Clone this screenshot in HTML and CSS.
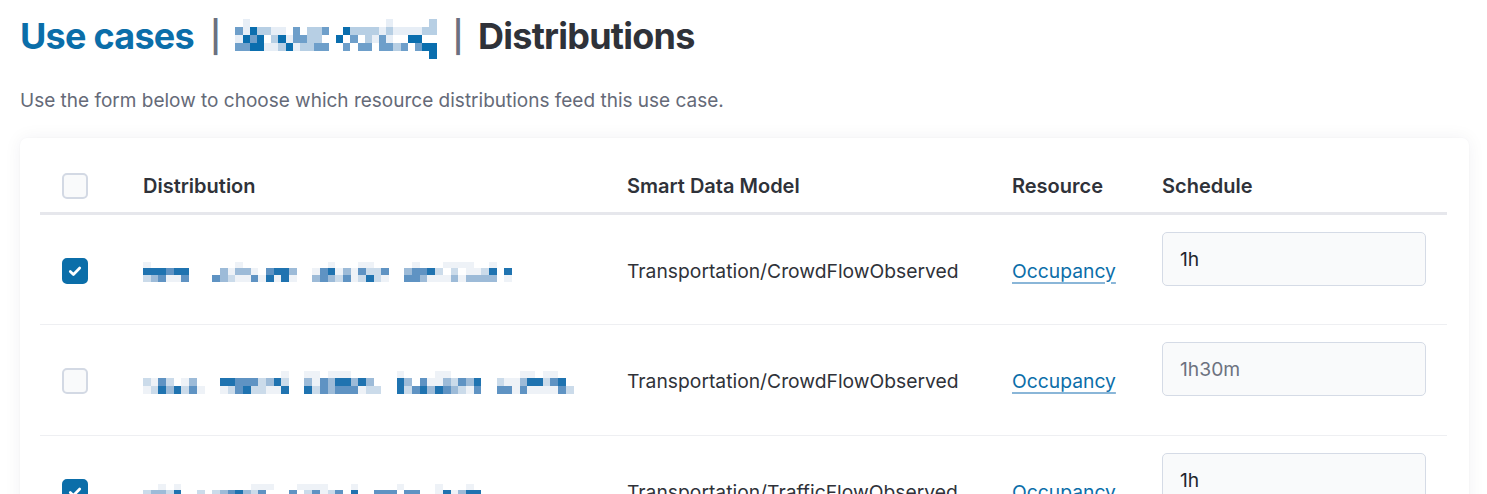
FILE: index.html
```html
<!DOCTYPE html>
<html lang="en">
<head>
<meta charset="utf-8">
<title>Distributions</title>
<link rel="stylesheet" href="styles.css">
</head>
<body>
<h1 class="title">
  <a class="crumb" href="#">Use cases</a>
  <span class="sep">|</span>
  <span class="mosaic mosaic-title" data-w="7.2" data-h="8" data-rows="0100000000000000000001000002|3142211030223004222212111122|1434024133220040302131004400|3344112412233003033033230344|0000000000000000000000000004"></span>
  <span class="sep">|</span>
  <span class="current">Distributions</span>
</h1>
<p class="lead">Use the form below to choose which resource distributions feed this use case.</p>

<div class="card">
  <table class="grid">
    <colgroup>
      <col class="c-check"><col class="c-dist"><col class="c-model"><col class="c-res"><col class="c-sched">
    </colgroup>
    <thead>
      <tr>
        <th><span class="box"></span></th>
        <th>Distribution</th>
        <th>Smart Data Model</th>
        <th>Resource</th>
        <th>Schedule</th>
      </tr>
    </thead>
    <tbody>
      <tr>
        <td><span class="box checked"><svg viewBox="0 0 16 16" width="18" height="18"><path d="M3.8 8.4l2.8 2.7L12.2 5.3" fill="none" stroke="#fff" stroke-width="2.4" stroke-linecap="round" stroke-linejoin="round"/></svg></span></td>
        <td><span class="mosaic mosaic-row" data-w="7.7" data-h="7" data-seed="3" data-cols="48" data-gaps="6,7,8,20,21,32,33,46"></span></td>
        <td>Transportation/CrowdFlowObserved</td>
        <td><a class="link" href="#">Occupancy</a></td>
        <td class="sched"><input class="field" type="text" value="1h"></td>
      </tr>
      <tr>
        <td><span class="box"></span></td>
        <td><span class="mosaic mosaic-row2" data-w="7.7" data-h="8" data-seed="11" data-cols="56" data-gaps="8,9,19,20,31,32,44,45"></span></td>
        <td>Transportation/CrowdFlowObserved</td>
        <td><a class="link" href="#">Occupancy</a></td>
        <td class="sched"><input class="field" type="text" placeholder="1h30m"></td>
      </tr>
      <tr>
        <td><span class="box checked"><svg viewBox="0 0 16 16" width="18" height="18"><path d="M3.8 8.4l2.8 2.7L12.2 5.3" fill="none" stroke="#fff" stroke-width="2.4" stroke-linecap="round" stroke-linejoin="round"/></svg></span></td>
        <td><span class="mosaic mosaic-row" data-w="7.7" data-h="7" data-seed="21" data-cols="44" data-gaps="5,6,17,18,28,29,36,37"></span></td>
        <td>Transportation/TrafficFlowObserved</td>
        <td><a class="link" href="#">Occupancy</a></td>
        <td class="sched"><input class="field" type="text" value="1h"></td>
      </tr>
    </tbody>
  </table>
</div>
<script src="mosaic.js"></script>
</body>
</html>
```

FILE: styles.css
```css
* { box-sizing: border-box; }
html, body { margin: 0; background: #ffffff; }
body {
  padding: 0 18px 0 20px;
  font-family: Inter, "Noto Sans", "Liberation Sans", sans-serif;
  color: #2f3239;
}
.title {
  margin: 13px 0 0;
  font-size: 36px;
  line-height: 43px;
  font-weight: 700;
  letter-spacing: -0.75px;
  display: flex;
  align-items: center;
}
.crumb { color: #0b6ea9; text-decoration: none; }
.sep {
  color: #6b7080;
  font-weight: 600;
  font-size: 31px;
  margin: 0 15px 0 16px;
}
.current { color: #2f3239; }
.lead {
  margin: 28px 0 0;
  font-size: 19px;
  line-height: 28px;
  color: #656a78;
}
.card {
  margin-top: 23px;
  background: #fff;
  border-radius: 7px;
  padding: 20px 22px 0 20px;
  box-shadow: 0 0 18px rgba(30, 40, 70, 0.06), 0 0 2px rgba(30, 40, 70, 0.04);
}
.grid {
  width: 100%;
  border-collapse: collapse;
  table-layout: fixed;
}
.c-check { width: 81px; }
.c-dist { width: 484px; }
.c-model { width: 385px; }
.c-res { width: 150px; }
.c-sched { width: 307px; }
.grid th, .grid td {
  padding: 0 22px;
  text-align: left;
  vertical-align: middle;
  white-space: nowrap;
}
.grid th {
  height: 55px;
  font-size: 20px;
  font-weight: 600;
  color: #2f3239;
  border-bottom: 3px solid #e6e7ec;
  padding-top: 2px;
}
.grid td {
  height: 111px;
  font-size: 19.3px;
  color: #2f3239;
  border-bottom: 1px solid #eeeff2;
  padding-top: 3px;
}
.grid td.sched { vertical-align: top; padding-top: 17px; }
.box {
  display: inline-flex;
  align-items: center;
  justify-content: center;
  width: 26px;
  height: 26px;
  border: 2px solid #d3d9e4;
  border-radius: 5px;
  background: #f9fafb;
  vertical-align: middle;
}
.box.checked { background: #0b6ea9; border-color: #0b6ea9; }
.link {
  color: #0b6ea9;
  text-decoration: underline;
  text-decoration-color: #8ab6d8;
  text-underline-offset: 4px;
  text-decoration-thickness: 2px;
}
.field {
  width: 264px;
  height: 54px;
  border: 1px solid #d5dbe6;
  border-radius: 5px;
  background: #f9fafb;
  padding: 0 17px;
  font-family: inherit;
  font-size: 19.3px;
  color: #23262d;
  outline: none;
}
.field::placeholder { color: #6d7280; }
.mosaic { display: inline-flex; flex-direction: column; vertical-align: middle; }
.mosaic .mrow { display: flex; }
.mosaic .mcell { flex: none; }
.mosaic-title { margin-top: 6px; }
.l0 { background: transparent; }
.l1 { background: #e7eef6; }
.l2 { background: #b7cfe4; }
.l3 { background: #6e9fca; }
.l4 { background: #0a6eae; }
.m1 { background: #eef2f7; }
.m2 { background: #cbdbea; }
.m3 { background: #9dbbd8; }
.m4 { background: #5f93c3; }
.m5 { background: #1f73b0; }
```

FILE: mosaic.js
```js
(function () {
  function rng(seed) {
    var s = seed * 9301 + 49297;
    return function () {
      s = (s * 9301 + 49297) % 233280;
      return s / 233280;
    };
  }
  document.querySelectorAll('.mosaic').forEach(function (el) {
    var w = parseFloat(el.dataset.w), h = parseFloat(el.dataset.h);
    var rows;
    if (el.dataset.rows) {
      rows = el.dataset.rows.split('|').map(function (r) {
        return r.split('').map(function (c) { return 'l' + c; });
      });
    } else {
      var r = rng(parseInt(el.dataset.seed, 10));
      var cols = parseInt(el.dataset.cols, 10);
      var gaps = el.dataset.gaps.split(',').map(Number);
      rows = [[], [], []];
      for (var i = 0; i < cols; i++) {
        var gap = gaps.indexOf(i) >= 0;
        var top = gap ? 0 : (r() < 0.25 ? 1 : 0);
        var a = gap ? 0 : 1 + Math.floor(r() * 5);
        var b = gap ? 0 : 1 + Math.floor(r() * 5);
        if (!gap && r() < 0.12) a = 0;
        rows[0].push('m' + top);
        rows[1].push('m' + a);
        rows[2].push('m' + b);
      }
      rows = rows.map(function (row) { return row.map(function (c) { return c === 'm0' ? 'l0' : c; }); });
    }
    rows.forEach(function (row, ri) {
      var rd = document.createElement('span');
      rd.className = 'mrow';
      row.forEach(function (cls) {
        var c = document.createElement('span');
        c.className = 'mcell ' + cls;
        c.style.width = w + 'px';
        c.style.height = (ri === 0 && !el.dataset.rows ? h - 1 : h) + 'px';
        rd.appendChild(c);
      });
      el.appendChild(rd);
    });
  });
})();
```
